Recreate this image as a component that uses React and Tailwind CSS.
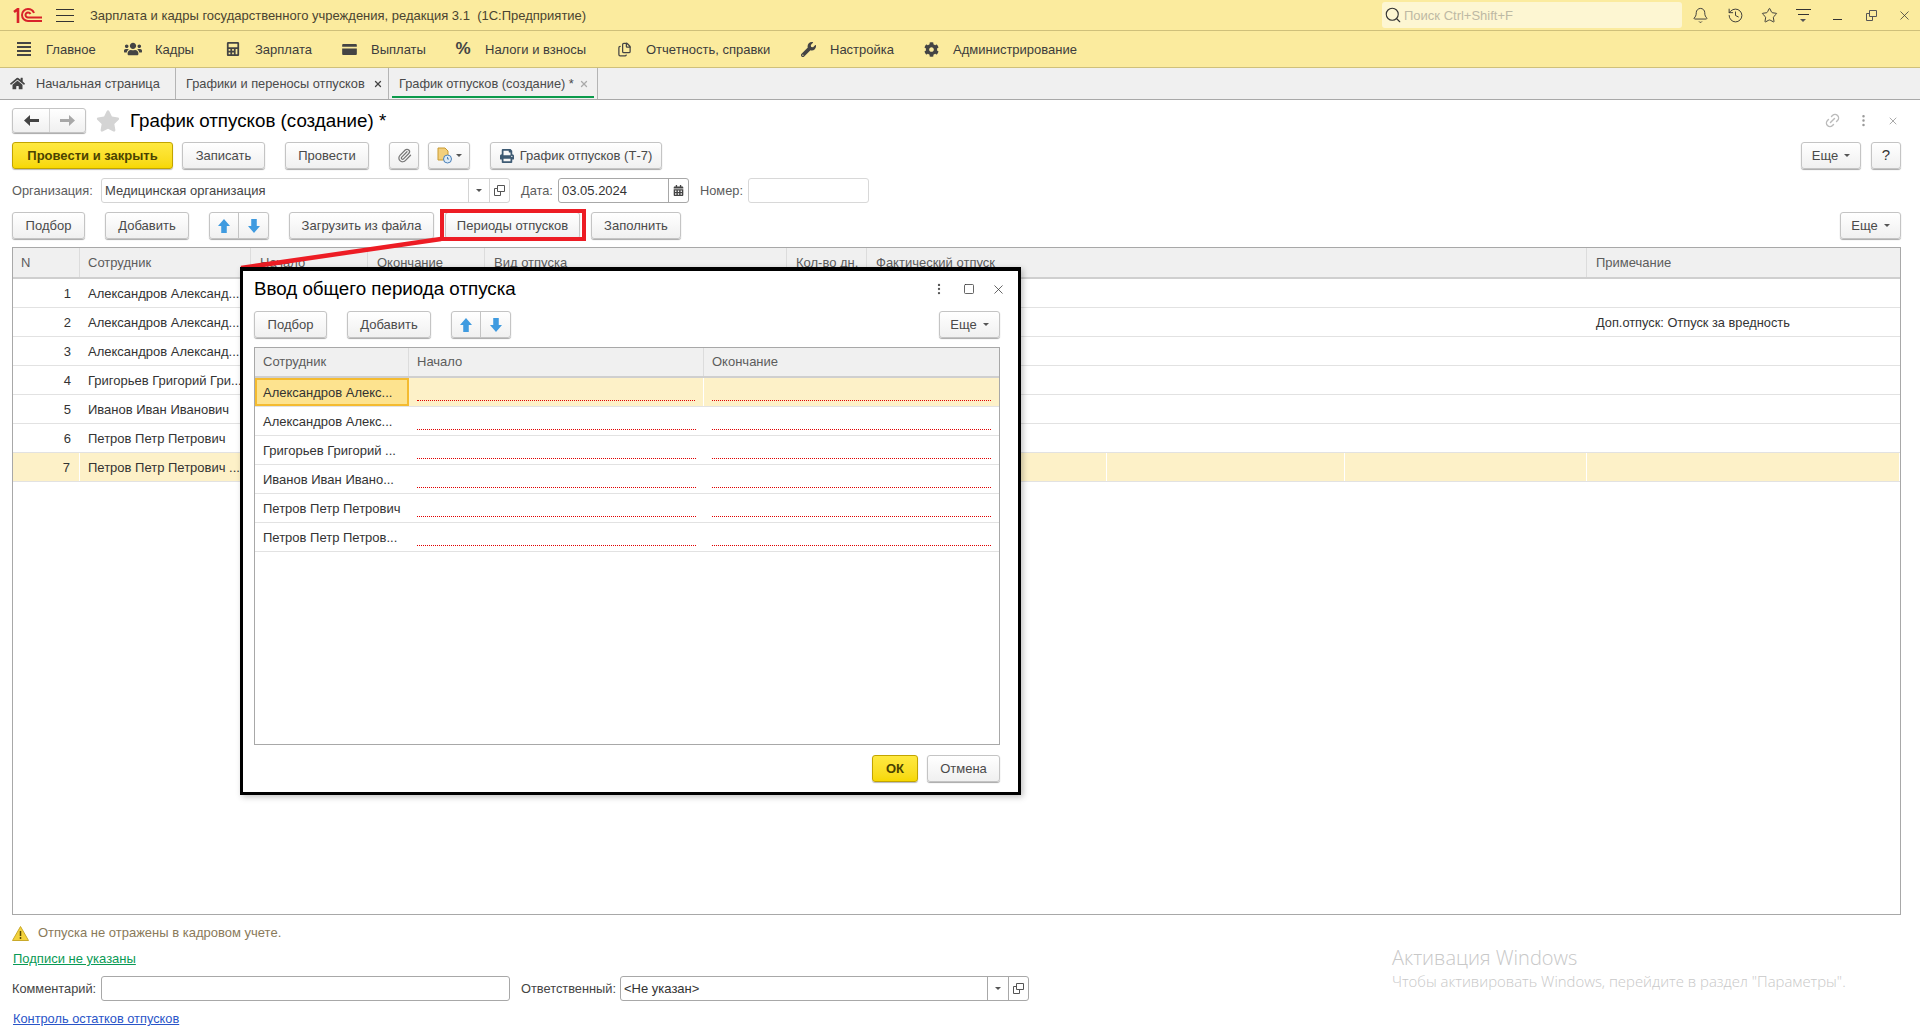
import React from 'react';
import { Bell, History, Star, Paperclip, Link2, X, Files, Search, EllipsisVertical, Square } from 'lucide-react';
import { FaHome, FaUsers, FaCalculator, FaWrench, FaCog, FaPrint, FaStar, FaCalendarAlt } from 'react-icons/fa';

const Btn = ({ className = '', children }) => (
    <div className={`h-[27px] flex items-center justify-center shrink-0 rounded-[3px] border border-[#c4c4c4] bg-linear-to-b from-white to-[#f0f0f0] shadow-[0_1px_1px_#a8a8a8] text-[#4a4a4a] ${className}`}>
        {children}
    </div>
);

const YellowBtn = ({ className = '', children }) => (
    <div className={`h-[27px] flex items-center justify-center shrink-0 rounded-[3px] border border-[#c2a400] bg-linear-to-b from-[#ffe93f] to-[#f7d800] shadow-[0_1px_1px_#b8b8b8] text-[#4b4300] font-bold ${className}`}>
        {children}
    </div>
);

const Caret = ({ className = '' }) => (
    <svg width="6" height="3" viewBox="0 0 6 3" className={`shrink-0 ${className}`}><path d="M0 0h6L3 3z" fill="#555" /></svg>
);

const UpDown = ({ className = '' }) => (
    <Btn className={`w-[60px] !justify-start ${className}`}>
        <div className="w-[29px] h-full flex items-center justify-center border-r border-[#c4c4c4]">
            <svg width="12" height="14" viewBox="0 0 13 15"><path d="M6.500 0L13 7.500H9.500V15h-6V7.500H0z" fill="#3f9be0" /></svg>
        </div>
        <div className="flex-1 flex items-center justify-center">
            <svg width="12" height="14" viewBox="0 0 13 15"><path d="M6.500 15L13 7.500H9.500V0h-6v7.500H0z" fill="#3f9be0" /></svg>
        </div>
    </Btn>
);

const OpenIcon = () => (
    <svg width="11" height="11" viewBox="0 0 11 11" fill="none" stroke="#555"><path d="M3.500 .5h7v6h-7z" /><path d="M3.500 3.500h-3v7h6v-4" /></svg>
);

const menu = [
    { label: 'Главное', w: 'w-[109px]', icon: <div className="w-[14px] flex flex-col gap-[2px]">{[0, 1, 2, 3].map(i => <div key={i} className="h-[2px] bg-[#444]" />)}</div> },
    { label: 'Кадры', w: 'w-[100px]', icon: <FaUsers size={18} color="#444" /> },
    { label: 'Зарплата', w: 'w-[116px]', icon: <FaCalculator size={14} color="#444" /> },
    {
        label: 'Выплаты', w: 'w-[114px]', icon: (
            <svg width="15" height="11" viewBox="0 0 16 12"><path d="M1 0h14a1 1 0 0 1 1 1v2H0V1a1 1 0 0 1 1-1zM0 5h16v6a1 1 0 0 1-1 1H1a1 1 0 0 1-1-1z" fill="#444" /></svg>
        )
    },
    { label: 'Налоги и взносы', w: 'w-[161px]', icon: <span className="text-[17px] font-bold text-[#444]">%</span> },
    { label: 'Отчетность, справки', w: 'w-[184px]', icon: <Files size={15} color="#444" /> },
    { label: 'Настройка', w: 'w-[123px]', icon: <FaWrench size={15} color="#444" /> },
    { label: 'Администрирование', w: 'w-[160px]', icon: <FaCog size={15} color="#444" /> },
];

const mainRows = [
    ['1', 'Александров Александ...', ''],
    ['2', 'Александров Александ...', 'Доп.отпуск: Отпуск за вредность'],
    ['3', 'Александров Александ...', ''],
    ['4', 'Григорьев Григорий Гри...', ''],
    ['5', 'Иванов Иван Иванович', ''],
    ['6', 'Петров Петр Петрович', ''],
    ['7', 'Петров Петр Петрович ...', ''],
];

const modalRows = [
    'Александров Алекс...',
    'Александров Алекс...',
    'Григорьев Григорий ...',
    'Иванов Иван Ивано...',
    'Петров Петр Петрович',
    'Петров Петр Петров...',
];

const mainCols = 'grid grid-cols-[67px_171px_117px_117px_302px_80px_240px_238px_242px_1fr]';
const modalCols = 'grid grid-cols-[154px_295px_1fr]';
const headCell = 'flex items-center bg-[#f0f0f0] border-r border-[#dcdcdc] text-[#5c5c5c] overflow-hidden whitespace-nowrap';

const App = () => {
    return (
        <div className="relative w-[1920px] h-[1031px] overflow-hidden bg-white text-[13px] text-[#333] font-['Liberation_Sans',Arial,sans-serif] flex flex-col">
            {/* title bar */}
            <div className="h-[31px] shrink-0 bg-[#fbeb9e] border-b border-[#cfc07a] flex items-center">
                <svg width="30" height="15" viewBox="0 0 30 15" className="ml-[13px]" fill="none" stroke="#d8232a" strokeWidth="2">
                    <path d="M1 4l4-3v14" strokeWidth="2.600" />
                    <path d="M29 13H15a6 6 0 1 1 0-12c3 0 5 1.500 6 4" />
                    <path d="M29 9.500H15a2.500 2.500 0 1 1 0-5c1.300 0 2 .5 2.500 1.500" />
                </svg>
                <div className="ml-[13px] w-[18px] flex flex-col gap-[5px]">
                    <div className="h-px bg-[#333]" /><div className="h-px bg-[#333]" /><div className="h-px bg-[#333]" />
                </div>
                <div className="ml-[16px] pt-px text-[#4a4430] whitespace-pre">Зарплата и кадры государственного учреждения, редакция 3.1  (1С:Предприятие)</div>
                <div className="ml-auto w-[300px] h-[26px] rounded-[3px] bg-[#fdf6d2] flex items-center pl-[2px] text-[#bdb9a4]">
                    <Search size={18} color="#333" strokeWidth={1.5} />
                    <span className="ml-[2px] pt-px">Поиск Ctrl+Shift+F</span>
                </div>
                <div className="w-[238px] shrink-0 flex items-center">
                    <div className="w-[36px] flex justify-center"><Bell size={17} color="#333" strokeWidth={1.3} /></div>
                    <div className="w-[34px] flex justify-center"><History size={17} color="#333" strokeWidth={1.3} /></div>
                    <div className="w-[34px] flex justify-center"><Star size={17} color="#333" strokeWidth={1.3} /></div>
                    <div className="w-[34px] flex flex-col items-center gap-[4px]">
                        <div className="w-[15px] h-px bg-[#333]" /><div className="w-[11px] h-px bg-[#333]" />
                        <Caret />
                    </div>
                    <div className="w-[34px] flex justify-center pt-[8px]"><div className="w-[9px] h-px bg-[#333]" /></div>
                    <div className="w-[34px] flex justify-center"><OpenIcon /></div>
                    <div className="w-[32px] flex justify-center"><X size={15} color="#333" strokeWidth={1.2} /></div>
                </div>
            </div>

            {/* section menu */}
            <div className="h-[37px] shrink-0 bg-[#fbeb9e] border-b border-[#cfc07a] flex items-center pl-[15px]">
                {menu.map((m) => (
                    <div key={m.label} className={`${m.w} shrink-0 flex items-center`}>
                        <div className="w-[18px] flex justify-center shrink-0">{m.icon}</div>
                        <span className="ml-[13px] pt-px text-[#3c3c3c] whitespace-nowrap">{m.label}</span>
                    </div>
                ))}
            </div>

            {/* open tabs */}
            <div className="h-[32px] shrink-0 bg-[#f0f0f0] border-b border-[#a8a8a8] flex text-[12.8px] text-[#4a4a4a]">
                <div className="w-[176px] flex items-center pl-[10px] border-r border-[#b4b4b4]">
                    <FaHome size={15} color="#444" />
                    <span className="ml-[11px]">Начальная страница</span>
                </div>
                <div className="w-[213px] flex items-center pl-[10px] border-r border-[#b4b4b4]">
                    <span>Графики и переносы отпусков</span>
                    <X size={10} color="#444" strokeWidth={3} className="ml-[8px]" />
                </div>
                <div className="relative w-[209px] flex items-center pl-[10px] border-r border-[#b4b4b4]">
                    <span>График отпусков (создание) *</span>
                    <X size={10} color="#aaa" strokeWidth={3} className="ml-[5px]" />
                    <div className="absolute left-[3px] right-[3px] bottom-[1px] h-[2px] bg-[#0b9a4b]" />
                </div>
            </div>

            {/* form */}
            <div className="flex-1 flex flex-col px-[12px] pr-[19px] pt-[8px]">
                <div className="h-[25px] shrink-0 flex items-center">
                    <Btn className="w-[74px] !h-[25px] !justify-start">
                        <div className="w-[37px] h-full flex items-center justify-center border-r border-[#d4d4d4]">
                            <svg width="15" height="11" viewBox="0 0 15 11"><path d="M0 5.500L6 0v4h9v3H6v4z" fill="#444" /></svg>
                        </div>
                        <div className="flex-1 flex items-center justify-center">
                            <svg width="15" height="11" viewBox="0 0 15 11"><path d="M15 5.500L9 0v4H0v3h9v4z" fill="#a8a8a8" /></svg>
                        </div>
                    </Btn>
                    <FaStar size={24} color="#d4d4d4" className="ml-[10px]" />
                    <h1 className="ml-[10px] pt-[2px] text-[18.75px] leading-none text-black font-normal">График отпусков (создание) *</h1>
                    <div className="ml-auto flex items-center text-[#aaa]">
                        <Link2 size={17} color="#bbb" className="-rotate-45" />
                        <EllipsisVertical size={15} color="#999" className="ml-[15px]" />
                        <X size={12} color="#aaa" className="ml-[16px] mr-[2px]" />
                    </div>
                </div>

                <div className="mt-[9px] h-[27px] shrink-0 flex items-center">
                    <YellowBtn className="w-[161px]">Провести и закрыть</YellowBtn>
                    <Btn className="w-[83px] ml-[9px]">Записать</Btn>
                    <Btn className="w-[84px] ml-[20px]">Провести</Btn>
                    <Btn className="w-[30px] ml-[20px]"><Paperclip size={15} color="#777" /></Btn>
                    <Btn className="w-[42px] ml-[9px] gap-[3px]">
                        <svg width="17" height="17" viewBox="0 0 17 17">
                            <path d="M2 1h7l3 3v9H2z" fill="#f2cf7c" stroke="#c99a30" />
                            <circle cx="11.500" cy="12" r="4" fill="#dceaf6" stroke="#4a80b8" />
                            <path d="M11.500 10v2h1.500" stroke="#4a80b8" fill="none" />
                        </svg>
                        <Caret />
                    </Btn>
                    <Btn className="w-[172px] ml-[20px] gap-[6px]"><FaPrint size={14} color="#3d5a73" />График отпусков (Т-7)</Btn>
                    <Btn className="w-[60px] ml-auto gap-[6px]">Еще<Caret /></Btn>
                    <Btn className="w-[30px] ml-[10px] text-[15px] text-[#333]">?</Btn>
                </div>

                <div className="mt-[9px] h-[25px] shrink-0 flex items-center">
                    <span className="w-[89px] shrink-0 text-[12.8px] text-[#5c5c5c]">Организация:</span>
                    <div className="w-[409px] h-full flex border border-[#d4d4d4] rounded-[3px]">
                        <div className="flex-1 flex items-center pl-[3px] text-[#444]">Медицинская организация</div>
                        <div className="w-[21px] flex items-center justify-center border-l border-[#d4d4d4]"><Caret /></div>
                        <div className="w-[20px] flex items-center justify-center border-l border-[#d4d4d4]"><OpenIcon /></div>
                    </div>
                    <span className="ml-[11px] w-[37px] shrink-0 text-[12.8px] text-[#5c5c5c]">Дата:</span>
                    <div className="w-[131px] h-full flex border border-[#a8a8a8] rounded-[3px]">
                        <div className="flex-1 flex items-center pl-[3px]">03.05.2024</div>
                        <div className="w-[20px] flex items-center justify-center border-l border-[#a8a8a8]"><FaCalendarAlt size={11} color="#444" /></div>
                    </div>
                    <span className="ml-[11px] w-[48px] shrink-0 text-[12.8px] text-[#5c5c5c]">Номер:</span>
                    <div className="w-[121px] h-full border border-[#d8d8d8] rounded-[3px]" />
                </div>

                <div className="mt-[9px] h-[27px] shrink-0 flex items-center">
                    <Btn className="w-[73px]">Подбор</Btn>
                    <Btn className="w-[84px] ml-[20px]">Добавить</Btn>
                    <UpDown className="ml-[20px]" />
                    <Btn className="w-[145px] ml-[20px]">Загрузить из файла</Btn>
                    <Btn className="w-[135px] ml-[11px]">Периоды отпусков</Btn>
                    <Btn className="w-[90px] ml-[11px]">Заполнить</Btn>
                    <Btn className="w-[61px] ml-auto gap-[6px]">Еще<Caret /></Btn>
                </div>

                {/* main table */}
                <div className="mt-[8px] h-[668px] shrink-0 border border-[#a8a8a8]">
                    <div className={`${mainCols} h-[31px] border-b-2 border-[#cfcfcf]`}>
                        <div className={`${headCell} pl-[8px]`}>N</div>
                        <div className={`${headCell} pl-[8px]`}>Сотрудник</div>
                        <div className={`${headCell} pl-[9px]`}>Начало</div>
                        <div className={`${headCell} pl-[9px]`}>Окончание</div>
                        <div className={`${headCell} pl-[9px]`}>Вид отпуска</div>
                        <div className={`${headCell} pl-[9px]`}>Кол-во дн.</div>
                        <div className={`${headCell} pl-[9px] col-span-3`}>Фактический отпуск</div>
                        <div className={`${headCell} pl-[9px] border-r-0`}>Примечание</div>
                    </div>
                    {mainRows.map(([n, name, note], i) => {
                        const sel = i === 6;
                        const cell = `flex items-center pt-px overflow-hidden whitespace-nowrap ${sel ? 'bg-[#fdf1c8] border-r border-white' : ''}`;
                        return (
                            <div key={n} className={`${mainCols} h-[29px] border-b border-[#e2e2e2]`}>
                                <div className={`${cell} justify-end pr-[9px]`}>{n}</div>
                                <div className={`${cell} pl-[8px]`}>{name}</div>
                                <div className={cell} />
                                <div className={cell} />
                                <div className={cell} />
                                <div className={cell} />
                                <div className={cell} />
                                <div className={cell} />
                                <div className={cell} />
                                <div className={`${cell} pl-[9px] text-[12.8px]`}>{note}</div>
                            </div>
                        );
                    })}
                </div>

                {/* footer */}
                <div className="mt-[8px] h-[20px] shrink-0 flex items-center">
                    <svg width="17" height="15" viewBox="0 0 17 15">
                        <path d="M8.500 .5L16.500 14.500H.5z" fill="#f3d23c" stroke="#c9a92a" />
                        <path d="M8.500 5v5M8.500 11v2" stroke="#5a4a00" strokeWidth="1.500" />
                    </svg>
                    <span className="ml-[9px] text-[#8a7a5a]">Отпуска не отражены в кадровом учете.</span>
                </div>
                <div className="mt-[6px] h-[20px] shrink-0 flex items-center pl-px">
                    <span className="underline text-[#0a9a55]">Подписи не указаны</span>
                </div>
                <div className="mt-[7px] h-[25px] shrink-0 flex items-center">
                    <span className="w-[89px] shrink-0 text-[12.8px] text-[#444]">Комментарий:</span>
                    <div className="w-[409px] h-full border border-[#a8a8a8] rounded-[3px]" />
                    <span className="ml-[11px] w-[99px] shrink-0 text-[12.8px] text-[#444]">Ответственный:</span>
                    <div className="w-[409px] h-full flex border border-[#a8a8a8] rounded-[3px]">
                        <div className="flex-1 flex items-center pl-[3px]">&lt;Не указан&gt;</div>
                        <div className="w-[21px] flex items-center justify-center border-l border-[#a8a8a8]"><Caret /></div>
                        <div className="w-[20px] flex items-center justify-center border-l border-[#a8a8a8]"><OpenIcon /></div>
                    </div>
                </div>
                <div className="mt-[10px] h-[16px] shrink-0 flex items-center pl-px">
                    <span className="underline text-[12.8px] text-[#2a55c8]">Контроль остатков отпусков</span>
                </div>
            </div>

            {/* red callout over the "Периоды отпусков" button */}
            <div className="absolute left-[440px] top-[209px] w-[146px] h-[32px] border-[4px] border-[#ed1c24]" />
            <svg className="absolute left-[238px] top-[236px]" width="206" height="36" viewBox="0 0 206 36">
                <path d="M3 32L203 3" stroke="#ed1c24" strokeWidth="4.500" fill="none" />
            </svg>

            {/* dialog */}
            <div className="absolute left-[240px] top-[267px] w-[781px] h-[528px] bg-white border-[3px] border-t-[4px] border-black shadow-[2px_2px_6px_rgba(0,0,0,0.25)] pl-[11px] pr-[18px] flex flex-col">
                <div className="h-[40px] shrink-0 flex items-center pb-[4px]">
                    <h2 className="text-[18.75px] leading-none text-black font-normal">Ввод общего периода отпуска</h2>
                    <div className="ml-auto flex items-center">
                        <EllipsisVertical size={14} color="#555" />
                        <Square size={12} color="#333" strokeWidth={1.5} className="ml-[17px]" />
                        <X size={15} color="#333" strokeWidth={1.2} className="ml-[16px] -mr-[6px]" />
                    </div>
                </div>
                <div className="h-[27px] shrink-0 flex items-center">
                    <Btn className="w-[73px]">Подбор</Btn>
                    <Btn className="w-[84px] ml-[20px]">Добавить</Btn>
                    <UpDown className="ml-[20px]" />
                    <Btn className="w-[61px] ml-auto gap-[6px]">Еще<Caret /></Btn>
                </div>
                <div className="mt-[9px] h-[398px] shrink-0 border border-[#a8a8a8]">
                    <div className={`${modalCols} h-[30px] border-b-2 border-[#cfcfcf]`}>
                        <div className={`${headCell} pl-[8px]`}>Сотрудник</div>
                        <div className={`${headCell} pl-[8px]`}>Начало</div>
                        <div className={`${headCell} pl-[8px] border-r-0`}>Окончание</div>
                    </div>
                    {modalRows.map((name, i) => {
                        const sel = i === 0;
                        return (
                            <div key={i} className={`${modalCols} h-[29px] border-b border-[#e2e2e2]`}>
                                <div className={`flex items-center pt-px whitespace-nowrap overflow-hidden ${sel ? 'pl-[6px] bg-[#fde38f] border-2 border-[#f4bb30]' : 'pl-[8px]'}`}>{name}</div>
                                <div className={`px-[8px] pt-[22px] ${sel ? 'bg-[#fdf1c8] border-r border-white' : ''}`}>
                                    <div className="border-b border-dotted border-[#e00000]" />
                                </div>
                                <div className={`px-[8px] pt-[22px] ${sel ? 'bg-[#fdf1c8]' : ''}`}>
                                    <div className="border-b border-dotted border-[#e00000]" />
                                </div>
                            </div>
                        );
                    })}
                </div>
                <div className="mt-[10px] h-[27px] shrink-0 flex items-center justify-end">
                    <YellowBtn className="w-[46px]">ОК</YellowBtn>
                    <Btn className="w-[73px] ml-[9px]">Отмена</Btn>
                </div>
            </div>

            {/* windows watermark */}
            <div className="absolute left-[1392px] top-[945px] text-[#c8c8c8] font-['Open_Sans',sans-serif] font-light">
                <div className="text-[20px] leading-[26px]">Активация Windows</div>
                <div className="text-[14.9px] leading-[20px]">Чтобы активировать Windows, перейдите в раздел "Параметры".</div>
            </div>
        </div>
    );
};

export default App;
